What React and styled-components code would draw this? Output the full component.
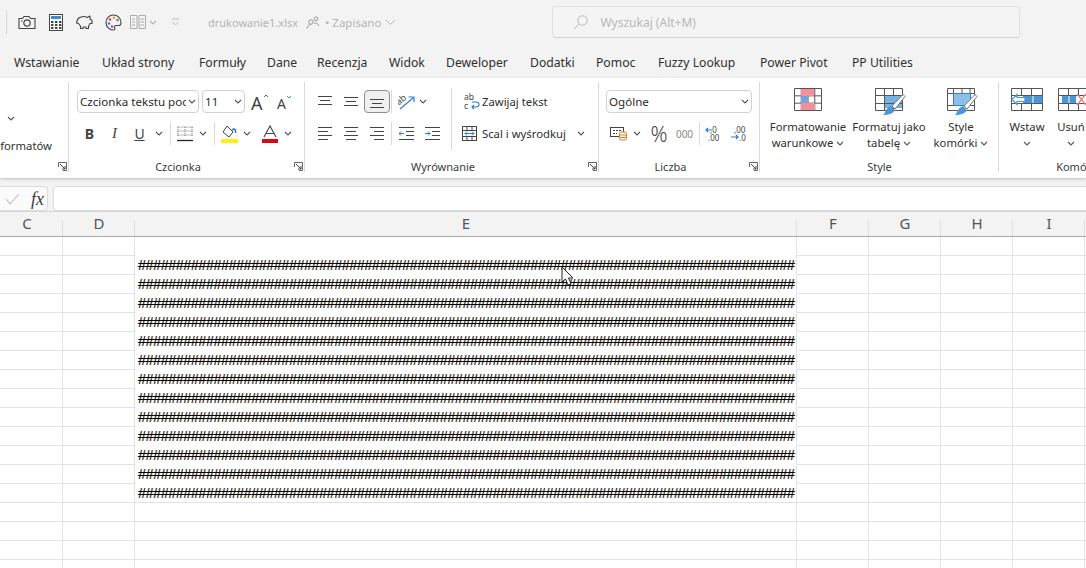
import React from 'react';
import styled, { createGlobalStyle } from 'styled-components';

const ui = '"Noto Sans", "Open Sans", "Liberation Sans", sans-serif';

const Global = createGlobalStyle`
  html, body { margin: 0; padding: 0; background: #fff; }
  body { font-family: ${ui}; color: #333; }
`;

const Page = styled.div`
  position: relative;
  width: 1086px;
  height: 568px;
  overflow: hidden;
  display: flex;
  flex-direction: column;
  background: #fff;
`;

/* top bar */
const TitleBar = styled.div`
  height: 44px;
  flex: none;
  display: flex;
  align-items: center;
  background: #f3f3f3;
  box-sizing: border-box;
  padding-left: 6px;
`;
const TitleRule = styled.div`
  width: 1px;
  height: 24px;
  background: #d8d8d8;
  margin-right: 11px;
`;
const QuickIcon = styled.div`
  width: ${p => p.$w}px;
  height: 24px;
  flex: none;
  display: flex;
  align-items: center;
  justify-content: center;
  opacity: ${p => (p.$dim ? 0.4 : 1)};
`;
const FileName = styled.span`
  font-size: 11px;
  color: #b4b4b4;
  margin-left: 22px;
  width: 98px;
  white-space: nowrap;
`;
const Saved = styled.span`
  font-size: 11.5px;
  color: #b4b4b4;
  margin: 0 4px 0 5px;
  white-space: nowrap;
`;
const SearchBox = styled.div`
  width: 468px;
  height: 32px;
  margin-left: 156px;
  box-sizing: border-box;
  flex: none;
  border: 1px solid #dfdfdf;
  border-bottom-color: #cfcfcf;
  border-radius: 4px;
  background: #f4f4f4;
  display: flex;
  align-items: center;
  gap: 12px;
  padding-left: 20px;
  font-size: 12px;
  color: #b8b8b8;
`;
const Tabs = styled.nav`
  height: 34px;
  flex: none;
  display: flex;
  align-items: center;
  padding: 2px 0 0 14px;
  box-sizing: border-box;
  background: #f3f3f3;
`;
const Tab = styled.span`
  font-size: 12.2px;
  color: #2f2f2f;
  white-space: nowrap;
  width: ${p => p.$w}px;
  flex: none;
`;

/* ribbon */
const Ribbon = styled.div`
  height: 100px;
  flex: none;
  display: flex;
  background: #fff;
  position: relative;
  z-index: 1;
  box-shadow: 0 1px 3px rgba(0, 0, 0, 0.22);
`;
const Group = styled.section`
  position: relative;
  width: ${p => p.$w}px;
  flex: none;
  box-sizing: border-box;
  display: flex;
  flex-direction: column;
  background: linear-gradient(#d9d9d9, #d9d9d9) right 4px / 1px 90px no-repeat;
`;
const Body = styled.div`
  flex: 1;
  min-height: 0;
  padding: ${p => p.$pad || '12px 0 0 7px'};
  display: ${p => (p.$row ? 'flex' : 'block')};
`;
const GroupLabel = styled.div`
  height: 22px;
  line-height: 22px;
  text-align: center;
  font-size: 11px;
  color: #3c3c3c;
  padding-right: ${p => p.$pr || 0}px;
`;
const Launcher = styled.svg`
  position: absolute;
  right: 2px;
  bottom: 7px;
`;
const Row = styled.div`
  display: flex;
  align-items: center;
  height: 23px;
  margin-bottom: 9px;
`;
const Cell = styled.div`
  width: ${p => p.$w}px;
  height: 23px;
  flex: none;
  display: flex;
  align-items: center;
  justify-content: center;
  box-sizing: border-box;
  padding-left: ${p => p.$pl || 0}px;
  font-size: ${p => p.$size || 13}px;
  font-weight: ${p => p.$weight || 400};
  color: ${p => p.$color || '#444'};
  ${p => p.$active && 'background:#f0f0f0;border:1px solid #8e8e8e;border-radius:4px;'}
`;
const ItalicMark = styled.i`
  font-family: "Liberation Serif", serif;
  font-size: 15px;
`;
const RowRule = styled.div`
  width: 1px;
  height: 23px;
  flex: none;
  background: #d9d9d9;
  margin: 0 ${p => p.$m ?? 3}px;
`;
const Select = styled.div`
  width: ${p => p.$w}px;
  height: 23px;
  flex: none;
  box-sizing: border-box;
  border: 1px solid #d2d2d2;
  border-radius: 4px;
  margin-right: ${p => p.$mr || 0}px;
  padding: 0 2px 0 2px;
  display: flex;
  align-items: center;
  justify-content: space-between;
  font-size: 11.6px;
  color: #2b2b2b;
  white-space: nowrap;
  overflow: hidden;
`;
const SelectText = styled.span`
  width: ${p => p.$w}px;
  overflow: hidden;
`;
const WrapColumn = styled.div`
  margin-left: 8px;
  display: flex;
  flex-direction: column;
`;
const TallRule = styled.div`
  width: 1px;
  height: 62px;
  flex: none;
  margin: -2px 0 0 6px;
  background: #d9d9d9;
`;
const TextButton = styled.div`
  height: 23px;
  margin-bottom: 9px;
  display: flex;
  align-items: center;
  font-size: 11.3px;
  color: #2f2f2f;
  white-space: nowrap;
`;
const TextGap = styled.span`
  margin: 0 ${p => p.$r || 0}px 0 ${p => p.$l || 0}px;
`;
const BigButton = styled.div`
  width: ${p => p.$w}px;
  flex: none;
  display: flex;
  flex-direction: column;
  align-items: center;
  font-size: 11.3px;
  line-height: 16px;
  color: #2f2f2f;
  white-space: nowrap;
`;
const BigIcon = styled.div`
  height: 24px;
  margin: 0 0 7px ${p => p.$shift || 0}px;
`;
const BigLine = styled.div`
  display: flex;
  align-items: center;
  gap: 3px;
  height: 16px;
`;
const CutText = styled.div`
  font-size: 11.3px;
  color: #2f2f2f;
  text-align: right;
  width: 52px;
  white-space: nowrap;
  margin-top: 17px;
  line-height: 16px;
`;
const LoneChevron = styled.div`
  padding-left: 7px;
`;

/* formula bar */
const FormulaBar = styled.div`
  height: 33px;
  flex: none;
  box-sizing: border-box;
  padding-top: 8px;
  display: flex;
  gap: 5px;
  background: #f3f3f3;
`;
const NameBox = styled.div`
  width: 48px;
  height: 25px;
  flex: none;
  box-sizing: border-box;
  background: #fbfbfb;
  border: 1px solid #dcdcdc;
  border-left: 0;
  border-radius: 0 4px 4px 0;
  display: flex;
  align-items: center;
  padding-left: 5px;
  gap: 11px;
`;
const Fx = styled.i`
  font-family: "Liberation Serif", serif;
  font-size: 18px;
  color: #3a3a3a;
  line-height: 1;
`;
const FormulaInput = styled.div`
  flex: 1;
  height: 25px;
  box-sizing: border-box;
  background: #fff;
  border: 1px solid #dcdcdc;
  border-right: 0;
  border-radius: 4px 0 0 4px;
`;

/* sheet */
const template = '72px 72px 662px 72px 72px 72px 72px 72px';
const Sheet = styled.div`
  margin-left: -9px;
  flex: 1;
  display: flex;
  flex-direction: column;
`;
const Head = styled.div`
  display: grid;
  grid-template-columns: ${template};
  height: 26px;
  flex: none;
  background: #f3f3f3;
  border-bottom: 1px solid #a9a9a9;
  box-sizing: border-box;
  box-shadow: inset 0 1px 0 #d6d6d6;
`;
const HeadCell = styled.div`
  text-align: center;
  font-size: 15px;
  line-height: 25px;
  color: #555;
  background: linear-gradient(#dfdfdf, #dfdfdf) right 9px / 1px 16px no-repeat;
`;
const GridRow = styled.div`
  display: grid;
  grid-template-columns: ${template};
  height: 19px;
  flex: none;
`;
const GridCell = styled.div`
  box-sizing: border-box;
  border-right: 1px solid #e2e2e7;
  border-bottom: 1px solid ${p => (p.$open ? '#fff' : '#e2e2e7')};
  overflow: hidden;
`;
const Hashes = styled.div`
  font-family: "Liberation Sans", Arial, sans-serif;
  font-size: 14.5px;
  letter-spacing: -0.52px;
  line-height: 19px;
  padding-left: 3px;
  white-space: nowrap;
  color: #000;
  text-shadow: 0.6px 0 rgba(230, 130, 0, 0.55), -0.6px 0 rgba(0, 130, 230, 0.35);
`;
const Cursor = styled.svg`
  position: absolute;
  left: 561px;
  top: 266px;
`;

/* drawings */
const Svg = ({ w, h, children, ...rest }) => (
  <svg width={w} height={h} viewBox={`0 0 ${w} ${h}`} fill="none" style={{ display: 'block', flex: 'none' }} {...rest}>
    {children}
  </svg>
);

const Chevron = ({ color = '#555' }) => (
  <Svg w={8} h={5}>
    <path d="M1 1l3 3 3-3" stroke={color} strokeWidth="1.1" />
  </Svg>
);
const WideChevron = () => (
  <Svg w={11} h={7}>
    <path d="M1 1l4.500 4.500L10 1" stroke="#b4b4b4" />
  </Svg>
);

const Bars = ({ rows, w = 15, h = 13, color = '#444' }) => (
  <Svg w={w} h={h}>
    {rows.map(([x1, x2, y]) => (
      <path key={`${x1}-${y}`} d={`M${x1} ${y}.5H${x2}`} stroke={color} />
    ))}
  </Svg>
);

const LauncherIcon = () => (
  <Launcher width="9" height="9" viewBox="0 0 9 9" fill="none">
    <path d="M.5 5V.5H8.500V8.500H5" stroke="#666" />
    <path d="M2 2l5 5M7 4v3H4" stroke="#444" />
  </Launcher>
);

const Camera = () => (
  <Svg w={18} h={15}>
    <path d="M1 3.500h3.500L6 1.500h5l1.500 2H17v10H1z" stroke="#444" strokeWidth="1.100" />
    <circle cx="9" cy="8" r="3.200" stroke="#444" strokeWidth="1.200" />
    <path d="M3 6h1.500" stroke="#444" />
  </Svg>
);
const Calculator = () => (
  <Svg w={14} h={17}>
    <rect x=".5" y=".5" width="13" height="16" fill="#fff" stroke="#444" />
    <rect x="2" y="2" width="10" height="3" fill="#3a8fd0" />
    {[7, 10, 13].map(y => [2, 6, 10].map(x => <rect key={`${x}${y}`} x={x} y={y} width="2.400" height="2" fill="#444" />))}
  </Svg>
);
const Piggy = () => (
  <Svg w={17} h={14}>
    <path
      d="M4 2.500c2-1 5-1.200 7 0l3-1.500v3l2 1.500v3h-2l-1.500 3v2h-2.500v-1.500h-3v1.500h-2.500v-2.500l-2-2.500-2-.5 1-3.500 2-2z"
      stroke="#444"
      strokeWidth="1.100"
      strokeLinejoin="round"
    />
  </Svg>
);
const Palette = () => (
  <Svg w={17} h={17}>
    <path
      d="M8.500 1a7.500 7.500 0 1 0 0 15c1.500 0 1.800-1 1.200-2-.7-1.200 0-2.500 1.500-2.500H14c1.500 0 2-1.500 2-3C16 4 12.500 1 8.500 1z"
      stroke="#444"
      strokeWidth="1.100"
    />
    <circle cx="5" cy="5.500" r="1.300" fill="#d4453c" />
    <circle cx="9" cy="3.800" r="1.300" fill="#e0a23a" />
    <circle cx="12.500" cy="6" r="1.300" fill="#4a9a4a" />
    <circle cx="4" cy="9.500" r="1.300" fill="#3a7fd0" />
    <circle cx="7" cy="12.500" r="1.200" fill="#8a4ab0" />
  </Svg>
);
const Compare = () => (
  <Svg w={16} h={14}>
    <path d="M.5.5h6.500v13H.5zM9 .5h6.500v13H9z" stroke="#444" />
    <path d="M2 4h3M2 7h3M2 10h3M10.500 4h3.500M10.500 7h3.500M10.500 10h3.500" stroke="#444" />
  </Svg>
);
const Customize = () => (
  <Svg w={9} h={8}>
    <path d="M1 1h7M1.500 4l3 3 3-3" stroke="#666" />
  </Svg>
);
const People = () => (
  <Svg w={14} h={13}>
    <circle cx="5" cy="6" r="2.200" stroke="#999" />
    <circle cx="10" cy="2.800" r="1.900" stroke="#999" />
    <path d="M1 12.500c.5-3 2-4 4-4M8 7c2-.5 4 .5 5 3" stroke="#999" />
  </Svg>
);
const SearchIcon = () => (
  <Svg w={15} h={15}>
    <circle cx="9.500" cy="5.500" r="4.700" stroke="#b4b4b4" />
    <path d="M6 9l-5 5" stroke="#b4b4b4" />
  </Svg>
);

const GrowA = ({ size, up, w, h }) => (
  <Svg w={w} h={h}>
    <text x="0" y={h - 1} fontFamily='"Noto Sans", sans-serif' fontSize={size} fill="#444">A</text>
    <path d={up ? `M${w - 6} 4l2-2 2 2` : `M${w - 6} 2l2 2 2-2`} stroke={up ? '#666' : '#3a8fd0'} />
  </Svg>
);
const BorderIcon = () => (
  <Svg w={16} h={16}>
    <path d="M.5 1h15M.5 5h15M.5 9h15M1 1v10M8 1v10M15 1v10" stroke="#777" strokeDasharray="1 1" />
    <path d="M0 14.500h16" stroke="#222" strokeWidth="1.300" />
  </Svg>
);
const FillIcon = () => (
  <Svg w={17} h={18}>
    <path d="M6 1l6 6-4 5-6-5z" stroke="#444" fill="#fff" />
    <path d="M11 5c3-2 4 0 3.500 3" stroke="#2a7fc9" strokeWidth="1.600" />
    <rect x="0" y="14" width="17" height="4" fill="#ffee10" />
  </Svg>
);
const ColorA = () => (
  <Svg w={16} h={18}>
    <path d="M2 12L8 1l6 11M4 8.500h8" stroke="#444" strokeWidth="1.100" />
    <rect x="0" y="14" width="16" height="4" fill="#d60a16" />
  </Svg>
);
const Orient = () => (
  <Svg w={18} h={16}>
    <text x="0" y="9" fontFamily='"Noto Sans", sans-serif' fontSize="9" fill="#444" transform="rotate(-40 4 9)">ab</text>
    <path d="M2 15L15 4M10.500 3H16v5" stroke="#2a7fc9" strokeWidth="1.200" />
  </Svg>
);
const Indent = ({ reverse }) => (
  <Svg w={15} h={13}>
    <path d="M0 .5h15M7 4.500h8M7 8.500h8M0 12.500h15" stroke="#444" />
    <path d={reverse ? 'M0 6.500h5M3 4.500l2 2-2 2' : 'M0 6.500h5M2 4.500l-2 2 2 2'} stroke="#2a7fc9" />
  </Svg>
);
const WrapIcon = () => (
  <Svg w={16} h={17}>
    <text x="0" y="7" fontFamily='"Noto Sans", sans-serif' fontSize="8.500" fill="#444">ab</text>
    <text x="0" y="16" fontFamily='"Noto Sans", sans-serif' fontSize="8.500" fill="#444">c</text>
    <path d="M8 14h4c4 0 4-5 0-5H8M10 12l-2 2 2 2" stroke="#2a7fc9" strokeWidth="1.100" />
  </Svg>
);
const MergeIcon = () => (
  <Svg w={15} h={15}>
    <rect x=".5" y=".5" width="14" height="14" stroke="#444" />
    <path d="M1 4.500h13M1 10.500h13M5 1v3M10 1v3M5 11v3M10 11v3" stroke="#444" />
    <path d="M3 7.500h9M5 5.500l-2 2 2 2M10 5.500l2 2-2 2" stroke="#2a7fc9" />
  </Svg>
);
const CurrencyIcon = () => (
  <Svg w={18} h={15}>
    <rect x=".5" y="1.500" width="13" height="9" stroke="#444" />
    <path d="M3 4.500h8M3 7.500h4" stroke="#444" strokeDasharray="2 1" />
    <rect x="9.500" y="6" width="7" height="8" rx="1.500" fill="#fff" stroke="#e07c20" />
    <path d="M9.500 9h7M9.500 11.500h7" stroke="#e07c20" />
  </Svg>
);
const DecimalIcon = ({ more }) => (
  <Svg w={17} h={15}>
    <text x={more ? 3 : 5} y="6.500" fontFamily='"Noto Sans", sans-serif' fontSize="8" fill="#444">{more ? ',00' : ',0'}</text>
    <text x={more ? 8 : 3} y="14.500" fontFamily='"Noto Sans", sans-serif' fontSize="8" fill="#444">{more ? ',0' : ',00'}</text>
    <path d={more ? 'M0 11h7M5 9l2 2-2 2' : 'M1 4h6M3 2L1 4l2 2'} stroke="#2a7fc9" strokeWidth="1.200" />
  </Svg>
);
const Table = ({ w = 28, h = 24, cols = 3, rows = 3, children }) => {
  const lines = [];
  for (let i = 0; i <= cols; i++) lines.push(`M${(i * (w - 1)) / cols + 0.5} .5V${h - 0.5}`);
  for (let i = 0; i <= rows; i++) lines.push(`M.5 ${(i * (h - 1)) / rows + 0.5}H${w - 0.5}`);
  return (
    <Svg w={w} h={h}>
      <path d={lines.join('')} stroke="#555" />
      {children}
    </Svg>
  );
};
const Brush = () => (
  <>
    <path d="M28 6.500l2 2L20 21l-3-3z" fill="#fff" stroke="#777" />
    <path d="M16 18l4 4c-1 3-6 5-12 5 3-2 2-7 8-9z" fill="#4a96d6" />
  </>
);
const CondIcon = () => (
  <Table w={28} h={23} cols={4} rows={3}>
    <rect x="7" y="1" width="13" height="7" fill="#f2919a" />
    <rect x="7" y="8" width="7" height="7" fill="#6fa8dc" />
    <rect x="7" y="15" width="14" height="7" fill="#f2919a" />
  </Table>
);
const TableStyleIcon = () => (
  <Svg w={31} h={28}>
    <rect x="10" y="7" width="17" height="13" fill="#76b3e3" />
    <path d="M.5.5h27v22H.5zM.5 7.500h27M.5 15.500h27M9.500.5v22M18.500.5v7M18.500 15.500v7" stroke="#555" />
    <Brush />
  </Svg>
);
const CellStyleIcon = () => (
  <Svg w={31} h={28}>
    <path d="M.5.5h27v22H.5zM.5 5.500h6M23 5.500h5M.5 17.500h6M23 17.500h5M6.500.5v5M15 .5v5M23 .5v5" stroke="#555" />
    <rect x="6.500" y="5.500" width="17" height="12" fill="#8cc0ea" stroke="#3a7fb8" />
    <Brush />
  </Svg>
);
const InsertIcon = () => (
  <Svg w={32} h={23}>
    <path d="M.5.5h31v22H.5zM.5 7.500h31M.5 15.500h31M10.500.5v7M20.500.5v7M10.500 15.500v7M20.500 15.500v7" stroke="#555" />
    <rect x="12" y="8" width="19.500" height="7" fill="#4a96d6" />
    <path d="M22 8v7" stroke="#fff" />
    <path d="M14 9.500H6V6.500L1 11.500l5 5v-3h8z" fill="#fff" stroke="#4a96d6" strokeWidth="1.200" />
  </Svg>
);
const DeleteIcon = () => (
  <Svg w={32} h={23}>
    <path d="M.5.5h31v22H.5zM.5 7.500h31M.5 15.500h31M10.500.5v7M20.500.5v7M10.500 15.500v7M20.500 15.500v7" stroke="#555" />
    <rect x="4" y="8" width="14" height="7" fill="#4a96d6" />
    <path d="M11 8v7" stroke="#fff" />
    <path d="M19 6l9 11M28 6l-9 11" stroke="#f08080" strokeWidth="1.300" />
  </Svg>
);

const columns = ['C', 'D', 'E', 'F', 'G', 'H', 'I', 'J'];
const tabs = [
  ['Wstawianie', 88],
  ['Układ strony', 97],
  ['Formuły', 68],
  ['Dane', 50],
  ['Recenzja', 72],
  ['Widok', 57],
  ['Deweloper', 84],
  ['Dodatki', 66],
  ['Pomoc', 62],
  ['Fuzzy Lookup', 102],
  ['Power Pivot', 92],
  ['PP Utilities', 80],
];
const rows = Array.from({ length: 18 }, (_, i) => i);
const hashes = '#'.repeat(87);

const App = () => (
  <Page>
    <Global />
    <TitleBar>
      <TitleRule />
      <QuickIcon $w={17}><Camera /></QuickIcon>
      <QuickIcon $w={41}><Calculator /></QuickIcon>
      <QuickIcon $w={17}><Piggy /></QuickIcon>
      <QuickIcon $w={41}><Palette /></QuickIcon>
      <QuickIcon $w={8} $dim><Compare /></QuickIcon>
      <QuickIcon $w={22} $dim><Chevron /></QuickIcon>
      <QuickIcon $w={22} $dim><Customize /></QuickIcon>
      <FileName>drukowanie1.xlsx</FileName>
      <People />
      <Saved>• Zapisano</Saved>
      <WideChevron />
      <SearchBox>
        <SearchIcon />
        Wyszukaj (Alt+M)
      </SearchBox>
    </TitleBar>
    <Tabs>
      {tabs.map(([name, w]) => (
        <Tab key={name} $w={w}>{name}</Tab>
      ))}
    </Tabs>
    <Ribbon>
      <Group $w={69}>
        <Body $pad="38px 0 0 0">
          <LoneChevron><Chevron /></LoneChevron>
          <CutText>formatów</CutText>
        </Body>
        <LauncherIcon />
      </Group>
      <Group $w={236}>
        <Body $pad="12px 0 0 8px">
          <Row>
            <Select $w={122} $mr={3}>
              <SelectText $w={106}>Czcionka tekstu poc</SelectText>
              <Chevron />
            </Select>
            <Select $w={43} $mr={4}>
              <span>11</span>
              <Chevron />
            </Select>
            <Cell $w={22}><GrowA size={18} w={19} h={18} up /></Cell>
            <Cell $w={28}><GrowA size={14} w={16} h={16} /></Cell>
          </Row>
          <Row>
            <Cell $w={25} $size={14} $weight={700}>B</Cell>
            <Cell $w={25}><ItalicMark>I</ItalicMark></Cell>
            <Cell $w={25} $size={14}><u>U</u></Cell>
            <Cell $w={14}><Chevron /></Cell>
            <RowRule $m={4} />
            <Cell $w={20}><BorderIcon /></Cell>
            <Cell $w={16}><Chevron /></Cell>
            <RowRule $m={3} />
            <Cell $w={23}><FillIcon /></Cell>
            <Cell $w={12}><Chevron /></Cell>
            <Cell $w={29} $pl={5}><ColorA /></Cell>
            <Cell $w={12}><Chevron /></Cell>
          </Row>
        </Body>
        <GroupLabel $pr={18}>Czcionka</GroupLabel>
        <LauncherIcon />
      </Group>
      <Group $w={294}>
        <Body $row>
          <div>
            <Row>
              <Cell $w={26}><Bars rows={[[0, 14, 1], [2, 12, 5], [0, 14, 9]]} /></Cell>
              <Cell $w={26}><Bars rows={[[0, 14, 2], [2, 12, 6], [0, 14, 10]]} /></Cell>
              <Cell $w={26} $active><Bars rows={[[0, 14, 4], [2, 12, 8], [0, 14, 12]]} /></Cell>
              <RowRule $m={1} />
              <Cell $w={24} $pl={3}><Orient /></Cell>
              <Cell $w={12}><Chevron /></Cell>
            </Row>
            <Row>
              <Cell $w={26}><Bars rows={[[0, 14, 0], [0, 10, 4], [0, 14, 8], [0, 10, 12]]} /></Cell>
              <Cell $w={26}><Bars rows={[[0, 14, 0], [2, 12, 4], [0, 14, 8], [2, 12, 12]]} /></Cell>
              <Cell $w={26}><Bars rows={[[0, 14, 0], [4, 14, 4], [0, 14, 8], [4, 14, 12]]} /></Cell>
              <RowRule $m={1} />
              <Cell $w={26}><Indent /></Cell>
              <Cell $w={26}><Indent reverse /></Cell>
            </Row>
          </div>
          <TallRule />
          <WrapColumn>
            <TextButton>
              <TextGap $l={4}><WrapIcon /></TextGap>
              <TextGap $l={2}>Zawijaj tekst</TextGap>
            </TextButton>
            <TextButton>
              <TextGap $l={2}><MergeIcon /></TextGap>
              <TextGap $l={5} $r={11}>Scal i wyśrodkuj</TextGap>
              <Chevron />
            </TextButton>
          </WrapColumn>
        </Body>
        <GroupLabel $pr={18}>Wyrównanie</GroupLabel>
        <LauncherIcon />
      </Group>
      <Group $w={161}>
        <Body>
          <Row>
            <Select $w={146}>
              <span>Ogólne</span>
              <Chevron />
            </Select>
          </Row>
          <Row>
            <Cell $w={26}><CurrencyIcon /></Cell>
            <Cell $w={10}><Chevron /></Cell>
            <Cell $w={34} $size={21} $weight={300}>%</Cell>
            <Cell $w={17} $size={10} $color="#888">000</Cell>
            <RowRule $m={6} />
            <Cell $w={14}><DecimalIcon /></Cell>
            <Cell $w={38}><DecimalIcon more /></Cell>
          </Row>
        </Body>
        <GroupLabel $pr={18}>Liczba</GroupLabel>
        <LauncherIcon />
      </Group>
      <Group $w={239}>
        <Body $row $pad="10px 0 0 7px">
          <BigButton $w={82}>
            <BigIcon><CondIcon /></BigIcon>
            <BigLine>Formatowanie</BigLine>
            <BigLine>warunkowe <Chevron /></BigLine>
          </BigButton>
          <BigButton $w={80}>
            <BigIcon $shift={2}><TableStyleIcon /></BigIcon>
            <BigLine>Formatuj jako</BigLine>
            <BigLine>tabelę <Chevron /></BigLine>
          </BigButton>
          <BigButton $w={64}>
            <BigIcon $shift={2}><CellStyleIcon /></BigIcon>
            <BigLine>Style</BigLine>
            <BigLine>komórki <Chevron /></BigLine>
          </BigButton>
        </Body>
        <GroupLabel>Style</GroupLabel>
      </Group>
      <Group $w={166}>
        <Body $row $pad="10px 0 0 4px">
          <BigButton $w={48}>
            <BigIcon><InsertIcon /></BigIcon>
            <BigLine>Wstaw</BigLine>
            <BigLine><Chevron /></BigLine>
          </BigButton>
          <BigButton $w={40}>
            <BigIcon $shift={6}><DeleteIcon /></BigIcon>
            <BigLine>Usuń</BigLine>
            <BigLine><Chevron /></BigLine>
          </BigButton>
        </Body>
        <GroupLabel $pr={8}>Komórki</GroupLabel>
      </Group>
    </Ribbon>
    <FormulaBar>
      <NameBox>
        <Svg w={15} h={12}>
          <path d="M1 6l4 5 9-10" stroke="#bcbcbc" strokeWidth="1.100" />
        </Svg>
        <Fx>fx</Fx>
      </NameBox>
      <FormulaInput />
    </FormulaBar>
    <Sheet>
      <Head>
        {columns.map(c => (
          <HeadCell key={c}>{c}</HeadCell>
        ))}
      </Head>
      {rows.map(r => (
        <GridRow key={r}>
          {columns.map(c => (
            <GridCell key={c} $open={c === 'E' && r < 13}>
              {c === 'E' && r >= 1 && r <= 13 && <Hashes>{hashes}</Hashes>}
            </GridCell>
          ))}
        </GridRow>
      ))}
    </Sheet>
    <Cursor width="15" height="20" viewBox="0 0 15 20">
      <path d="M1 1v15l3.500-3 2.500 6 3-1.500L7.500 12H12z" fill="#fff" stroke="#222" />
    </Cursor>
  </Page>
);

export default App;
